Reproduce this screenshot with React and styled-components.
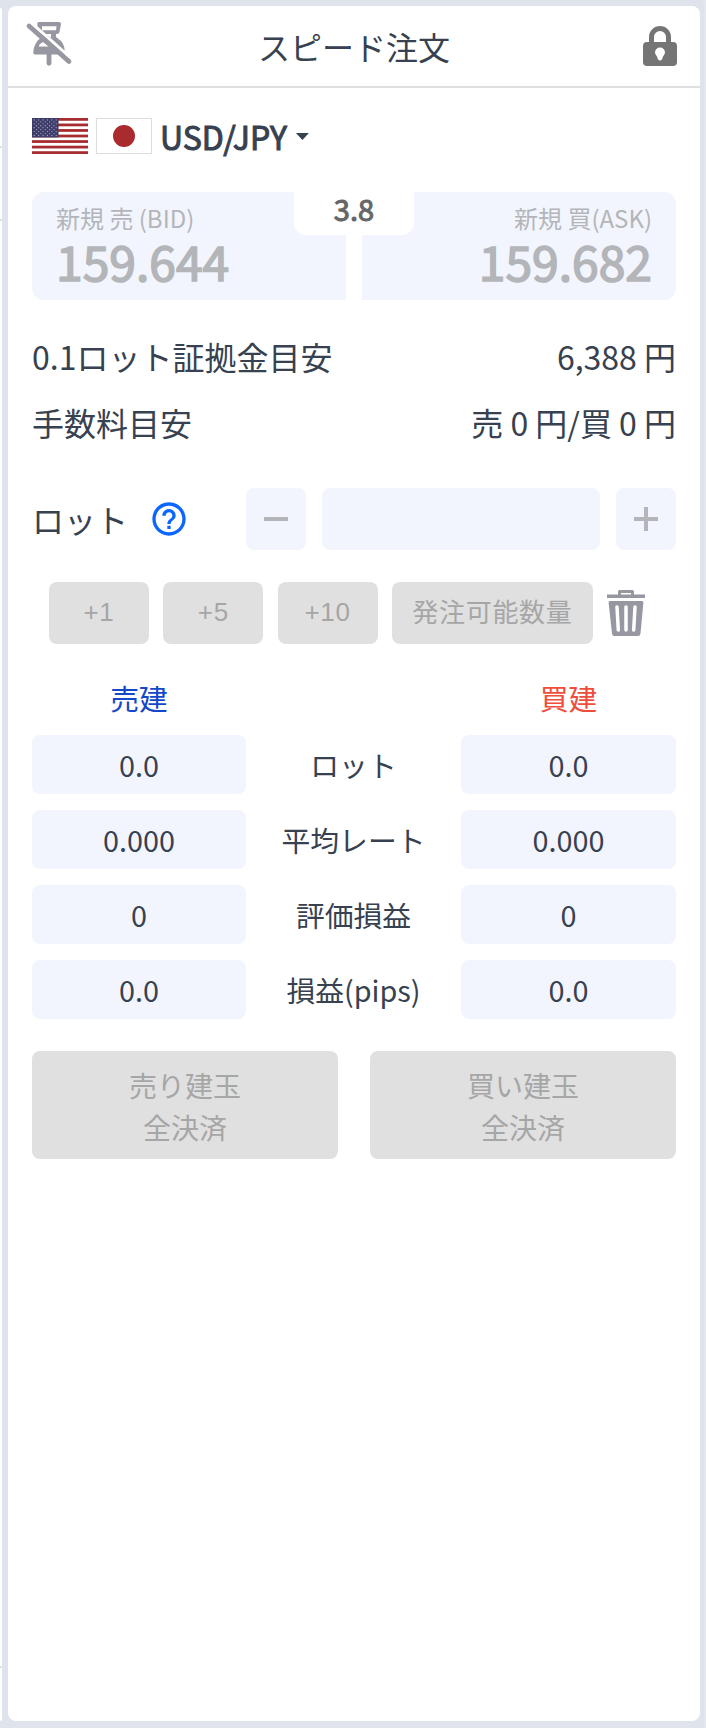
import React from 'react';
import styled, { createGlobalStyle } from 'styled-components';

const positions = [
    { label: 'ロット', sell: '0.0', buy: '0.0' },
    { label: '平均レート', sell: '0.000', buy: '0.000' },
    { label: '評価損益', sell: '0', buy: '0' },
    { label: '損益(pips)', sell: '0.0', buy: '0.0' },
];

const PinOffIcon = () => (
    <svg width="48" height="46" viewBox="0 0 48 46" fill="none" stroke="#9697a0">
        <path d="M12.300 2.500 Q12.300 1 14 1 H34 Q36 1 36 3 L34.500 11 Q34 13 32 13 H31 V16 L36 20 Q39.500 24 39.500 29 V33.500 H10.500 Q8 33.500 8.300 31 Q9 22 15.500 17 V13 L12.500 6 Z" fill="#9697a0" stroke="none" />
        <path d="M17 5.200 H31.500 L31 9.200 H17 Z M13.800 25.500 L14.500 23.500 L18 21 L24 25.500 Z" fill="#fff" stroke="none" />
        <path d="M21 13 H26 V17 Z" fill="#fff" stroke="none" />
        <path d="M24 33 V42.300" strokeWidth="4.800" strokeLinecap="round" />
        <path d="M6 1.600 L48 39" stroke="#fff" strokeWidth="3.100" />
        <path d="M4 5 L44 40.500" strokeWidth="4.800" strokeLinecap="round" />
    </svg>
);

const LockIcon = () => (
    <svg width="34" height="40" viewBox="0 0 34 40">
        <path d="M8.500 18 V11 a8.500 8.500 0 0 1 17 0 V18" fill="none" stroke="#757575" strokeWidth="5" />
        <rect y="16" width="34" height="24" rx="4" fill="#757575" />
        <path d="M17 21.500 a5 5 0 0 0 -5 5 c0 2 2.500 3.500 2.800 6.500 q2.200 3 4.400 0 c.3 -3 2.800 -4.500 2.800 -6.500 a5 5 0 0 0 -5 -5z" fill="#fff" />
    </svg>
);

const UsFlag = () => (
    <svg width="56" height="36" viewBox="0 0 56 36">
        <rect width="56" height="36" fill="#fff" />
        {[0, 2, 4, 6, 8, 10, 12].map(i => (
            <rect key={i} y={i * 36 / 13} width="56" height={36 / 13} fill="#a62c30" />
        ))}
        <rect width="26.500" height="19.400" fill="#3c3b6a" />
        {[0, 1, 2, 3, 4, 5, 6, 7, 8].map(row => (
            (row % 2 ? [0, 1, 2, 3, 4] : [0, 1, 2, 3, 4, 5]).map(col => (
                <circle key={`${row}-${col}`} cx={2.2 + col * 4.4 + (row % 2) * 2.2} cy={1.9 + row * 1.95} r=".65" fill="#a9a8c4" />
            ))
        ))}
    </svg>
);

const JpFlag = () => (
    <svg width="56" height="36" viewBox="0 0 56 36">
        <rect x=".5" y=".5" width="55" height="35" fill="#fff" stroke="#dedede" />
        <circle cx="28" cy="18" r="11" fill="#a92b2e" />
    </svg>
);

const HelpIcon = () => (
    <svg width="40" height="40" viewBox="0 0 24 24" fill="#0a66ff">
        <path d="M11 18h2v-2h-2v2zm1-16C6.480 2 2 6.480 2 12s4.480 10 10 10 10-4.480 10-10S17.520 2 12 2zm0 18c-4.410 0-8-3.590-8-8s3.590-8 8-8 8 3.590 8 8-3.590 8-8 8zm0-14c-2.210 0-4 1.790-4 4h2c0-1.100.9-2 2-2s2 .9 2 2c0 2-3 1.750-3 5h2c0-2.250 3-2.500 3-5 0-2.210-1.790-4-4-4z" />
    </svg>
);

const StepIcon = ({ plus }) => (
    <svg width="24" height="24" viewBox="0 0 24 24" fill="#b3b5b9">
        <rect y="10" width="24" height="4" />
        {plus && <rect x="10" width="4" height="24" />}
    </svg>
);

const TrashIcon = () => (
    <svg width="38" height="46" viewBox="0 0 38 46">
        <path d="M0 4.500 H11 V1.500 Q11 0 12.500 0 H25.500 Q27 0 27 1.500 V4.500 H38 V8 H0 Z" fill="#9697a0" />
        <path d="M14 3 H24 V4.500 H14 Z" fill="#fff" />
        <path d="M3 11 H35 Q36.500 11 36.400 12.500 L33.500 43.500 Q33.200 46 31 46 H7.500 Q5.200 46 5 43.500 L1.600 12.500 Q1.500 11 3 11 Z" fill="#9697a0" />
        <g stroke="#fff" strokeWidth="3.500" strokeLinecap="round">
            <path d="M10 17 L11.300 40" />
            <path d="M19 17 V40" />
            <path d="M28 17 L26.700 40" />
        </g>
    </svg>
);

export default function App() {
    return (
        <Screen>
            <GlobalStyle />
            <LeftEdge>
                <EdgeLine />
                <EdgeLine />
                <EdgeLine />
            </LeftEdge>
            <Panel>
                <Header>
                    <PinButton><PinOffIcon /></PinButton>
                    <Title>スピード注文</Title>
                    <LockButton><LockIcon /></LockButton>
                </Header>
                <Body>
                    <Pair>
                        <UsFlag />
                        <JpFlag />
                        <PairName>USD/JPY</PairName>
                        <Caret />
                    </Pair>
                    <Prices>
                        <Price>
                            <PriceLabel>新規 売 (BID)</PriceLabel>
                            <PriceValue>159.644</PriceValue>
                        </Price>
                        <Price $buy>
                            <PriceLabel>新規 買(ASK)</PriceLabel>
                            <PriceValue>159.682</PriceValue>
                        </Price>
                        <Spread>3.8</Spread>
                    </Prices>
                    <Estimates>
                        <Estimate><span>0.1ロット証拠金目安</span><span>6,388 円</span></Estimate>
                        <Estimate><span>手数料目安</span><span>売 0 円/買 0 円</span></Estimate>
                    </Estimates>
                    <LotRow>
                        <LotLabel>ロット</LotLabel>
                        <HelpIcon />
                        <Stepper>
                            <StepButton><StepIcon /></StepButton>
                            <LotInput />
                            <StepButton><StepIcon plus /></StepButton>
                        </Stepper>
                    </LotRow>
                    <QuickRow>
                        <QuickButton>+1</QuickButton>
                        <QuickButton>+5</QuickButton>
                        <QuickButton>+10</QuickButton>
                        <QuickButton $wide>発注可能数量</QuickButton>
                        <TrashIcon />
                    </QuickRow>
                    <Positions>
                        <Side color="#1448c8">売建</Side>
                        <Side />
                        <Side color="#f04e3c">買建</Side>
                        {positions.map(row => (
                            <React.Fragment key={row.label}>
                                <Cell $filled>{row.sell}</Cell>
                                <Cell>{row.label}</Cell>
                                <Cell $filled>{row.buy}</Cell>
                            </React.Fragment>
                        ))}
                    </Positions>
                    <Closing>
                        <CloseButton>売り建玉<br />全決済</CloseButton>
                        <CloseButton>買い建玉<br />全決済</CloseButton>
                    </Closing>
                </Body>
            </Panel>
            <RightEdge />
        </Screen>
    );
}

/********************** Styled Components **********************/

const GlobalStyle = createGlobalStyle`
    * {
        box-sizing: border-box;
    }

    body {
        margin: 0;
        background: #dfe3ec;
        color: #37414f;
        font-family: "Noto Sans CJK JP", sans-serif;
    }

    button {
        border: 0;
        padding: 0;
        font-family: inherit;
    }

    svg {
        display: block;
        flex-shrink: 0;
    }
`;

const Screen = styled.div`
    display: flex;
    width: 706px;
    height: 1728px;
    overflow: hidden;
`;

const LeftEdge = styled.div`
    width: 2px;
    height: 1713px;
    margin-top: 8px;
    padding-top: 138px;
    background: #fff;
    border-radius: 0 2px 2px 0;
`;

const EdgeLine = styled.div`
    height: 2px;
    background: #dfdfdf;

    &:nth-child(2) {
        margin-top: 71px;
    }

    &:nth-child(3) {
        margin-top: 1445px;
    }
`;

const RightEdge = styled.div`
    width: 2px;
    background: #e4e7ef;
`;

const Panel = styled.section`
    width: 692px;
    height: 1715px;
    margin: 6px 4px 0 6px;
    background: #fff;
    border-radius: 8px;
`;

const Header = styled.header`
    display: grid;
    grid-template-columns: 1fr auto 1fr;
    align-items: start;
    height: 82px;
    padding: 15px 23px 0 17px;
    border-bottom: 2px solid #dfdfdf;
`;

const PinButton = styled.button`
    justify-self: start;
    background: none;
`;

const LockButton = styled.button`
    justify-self: end;
    margin-top: 5px;
    background: none;
`;

const Title = styled.h1`
    margin: 1px 0 0 6px;
    font-size: 32px;
    font-weight: 400;
    line-height: 48px;
`;

const Body = styled.div`
    padding: 30px 24px 0;
`;

const Pair = styled.div`
    display: flex;
    gap: 8px;
    height: 36px;
`;

const PairName = styled.span`
    font-size: 32px;
    line-height: 36px;
    -webkit-text-stroke: 1px;
`;

const Caret = styled.i`
    width: 13px;
    height: 7px;
    margin: 15px 0 0 1px;
    background: #37414f;
    clip-path: polygon(0 0, 100% 0, 50% 100%);
`;

const Prices = styled.div`
    position: relative;
    display: grid;
    grid-template-columns: 1fr 1fr;
    gap: 16px;
    height: 108px;
    margin-top: 38px;
`;

const Price = styled.div`
    padding: 8px 24px 0;
    background: #f2f5fd;
    border-radius: ${props => props.$buy ? '0 12px 12px 0' : '12px 0 0 12px'};
    color: #b3b5b9;
    text-align: ${props => props.$buy ? 'right' : 'left'};
`;

const PriceLabel = styled.div`
    font-size: 24px;
    line-height: 35px;
`;

const PriceValue = styled.div`
    font-size: 48px;
    line-height: 51px;
    -webkit-text-stroke: 1.6px;
`;

const Spread = styled.div`
    position: absolute;
    top: 0;
    left: 262px;
    width: 120px;
    height: 43px;
    background: #fff;
    border-radius: 0 0 12px 12px;
    color: #666;
    font-size: 29px;
    line-height: 33px;
    text-align: center;
    -webkit-text-stroke: 1px;
`;

const Estimates = styled.div`
    margin-top: 31px;
`;

const Estimate = styled.div`
    display: flex;
    justify-content: space-between;
    height: 66px;
    font-size: 32px;
    line-height: 50px;
`;

const LotRow = styled.div`
    display: flex;
    align-items: center;
    height: 62px;
    margin-top: 25px;
`;

const LotLabel = styled.span`
    width: 117px;
    font-size: 32px;
    line-height: 48px;
`;

const Stepper = styled.div`
    display: flex;
    gap: 16px;
    margin-left: auto;
`;

const StepButton = styled.button`
    display: grid;
    place-items: center;
    width: 60px;
    height: 62px;
    background: #f2f5fd;
    border-radius: 8px;
`;

const LotInput = styled.div`
    width: 278px;
    height: 62px;
    background: #f2f5fd;
    border-radius: 8px;
`;

const QuickRow = styled.div`
    display: flex;
    align-items: center;
    gap: 14.3px;
    margin-top: 32px;
    padding-left: 17px;
`;

const QuickButton = styled.button`
    width: ${props => props.$wide ? '201px' : '100px'};
    height: 62px;
    padding-bottom: ${props => props.$wide ? '5px' : '1px'};
    background: #e0e0e0;
    border-radius: 8px;
    color: #a6a6a6;
    font-family: "Liberation Sans", "Noto Sans CJK JP", sans-serif;
    font-size: 26px;
    letter-spacing: .74px;
`;

const Positions = styled.div`
    display: grid;
    grid-template-columns: 214px 1fr 215px;
    grid-template-rows: 59px;
    row-gap: 16px;
    margin-top: 16px;
    font-size: 28.8px;
    text-align: center;
`;

const Side = styled.div`
    color: ${props => props.color};
    line-height: 76px;
`;

const Cell = styled.div`
    height: 59px;
    border-radius: 8px;
    background: ${props => props.$filled ? '#f2f5fd' : 'none'};
    line-height: 60px;
`;

const Closing = styled.div`
    display: grid;
    grid-template-columns: 1fr 1fr;
    gap: 32px;
    margin-top: 32px;
`;

const CloseButton = styled.button`
    height: 108px;
    padding-top: 2px;
    background: #e0e0e0;
    border-radius: 8px;
    color: #a6a6a6;
    font-size: 28px;
    line-height: 42px;
`;
